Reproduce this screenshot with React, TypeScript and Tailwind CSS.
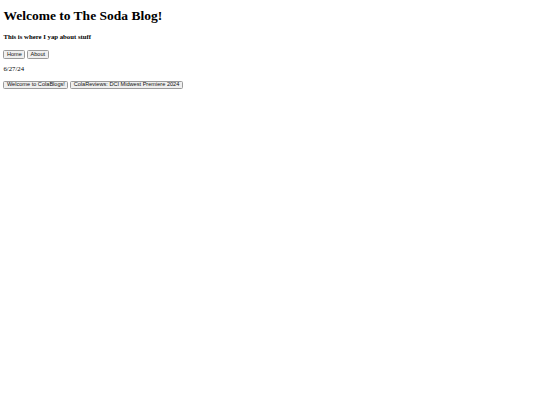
import React from 'react';

const btn =
  "h-[8.7px] px-[2.5px] border border-[#9a9a9a] rounded-[1.5px] bg-[#efefef] text-[#111] text-[5.6px] leading-none font-['Liberation_Sans',Arial,sans-serif] whitespace-nowrap";

export default function App() {
  return (
    <div className="min-h-[405px] bg-white text-black px-[3.4px] pt-[8px] font-['Liberation_Serif','Times_New_Roman',serif]">
      <h1 className="text-[13.5px] leading-[15.5px] font-bold">Welcome to The Soda Blog!</h1>
      <h4 className="mt-[9.5px] text-[6.75px] leading-[7.8px] font-bold">This is where I yap about stuff</h4>

      <nav className="mt-[9.5px] flex gap-[1.7px]">
        <button className={btn}>Home</button>
        <button className={btn}>About</button>
      </nav>

      <p className="mt-[6.3px] text-[6.75px] leading-[7.8px]">6/27/24</p>

      <div className="mt-[7.5px] flex gap-[1.7px]">
        <button className={btn}>Welcome to ColaBlogs!</button>
        <button className={btn}>ColaReviews: DCI Midwest Premiere 2024</button>
      </div>
    </div>
  );
}
